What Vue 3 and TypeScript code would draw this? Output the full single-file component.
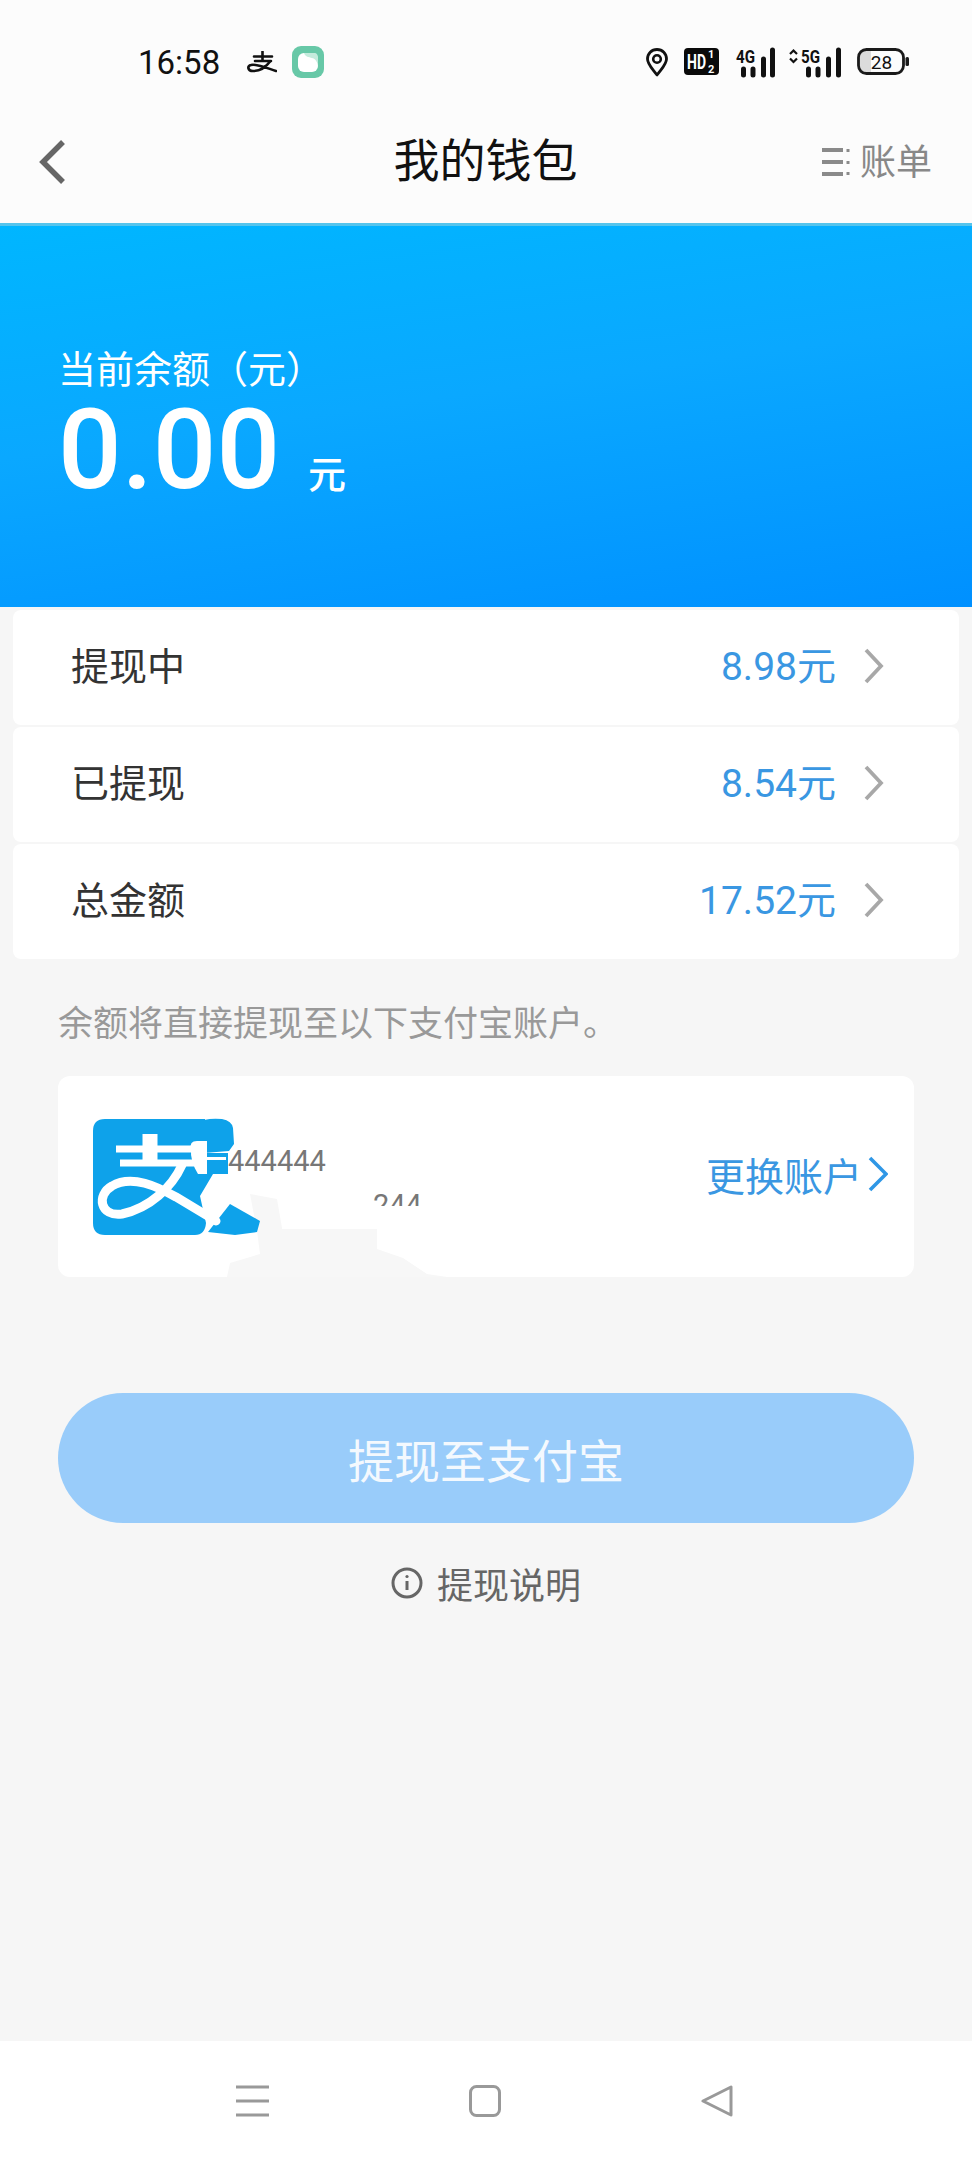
<script setup lang="ts">
interface WalletRow {
  label: string
  amount: string
}

const rows: WalletRow[] = [
  { label: '提现中', amount: '8.98元' },
  { label: '已提现', amount: '8.54元' },
  { label: '总金额', amount: '17.52元' },
]
</script>

<template>
  <div class="page">
    <!-- 状态栏 -->
    <div class="status-bar">
      <span class="time">16:58</span>
      <svg class="notify-pay" width="30" height="22" viewBox="247 52 30 22" fill="none" stroke="#111" stroke-width="2.6" stroke-linecap="round">
        <path d="M254 57.5H272M255 62H271M262.5 52.5V62" />
        <path d="M270 62.5C266 68 260 72 253 72C247.500 72 247 67 251 66C256 64.500 264 68 276 72" />
      </svg>
      <svg class="notify-app" width="32" height="32" viewBox="0 0 32 32">
        <rect width="32" height="32" rx="9" fill="#67c8a7" />
        <rect x="6" y="7" width="20" height="19" rx="6" fill="#fff" />
        <path d="M12 7H22C25 7 26 9 26 12V21C26 19 25 13 20 12C17 11 13 11 12 7Z" fill="#c4ebdc" />
      </svg>
      <svg class="status-icons" width="270" height="36" viewBox="645 44 270 36">
        <path d="M658 75C652 67 648.500 64 648.500 59C648.500 53.500 652.500 49.500 658 49.500C663.500 49.500 667.500 53.500 667.500 59C667.500 64 664 67 658 75Z" fill="none" stroke="#111" stroke-width="2.800" stroke-linejoin="round" />
        <circle cx="658" cy="59" r="3.800" fill="none" stroke="#111" stroke-width="2.600" />
        <rect x="685" y="48" width="35" height="27" rx="4" fill="#0a0a0a" />
        <text x="688" y="69" class="hd" textLength="19" lengthAdjust="spacingAndGlyphs">HD</text>
        <text x="709" y="58" class="hd-sub">1</text>
        <text x="709" y="73" class="hd-sub">2</text>
        <text x="737" y="63" class="net" textLength="19" lengthAdjust="spacingAndGlyphs">4G</text>
        <path d="M744.500 69V75M754 69V75M764.500 59V75M773.500 50V75" stroke="#111" stroke-width="5" stroke-linecap="round" />
        <path d="M791 54L794.500 50.500L798 54M791 58.500L794.500 62L798 58.500" fill="none" stroke="#111" stroke-width="2.200" />
        <text x="802" y="63" class="net" textLength="19" lengthAdjust="spacingAndGlyphs">5G</text>
        <path d="M809.500 69V75M819 69V75M829.500 59V75M839.500 50V75" stroke="#111" stroke-width="5" stroke-linecap="round" />
        <path d="M866 50H872V73H866C861 73 859.500 71 859.500 67V56C859.500 52 861 50 866 50Z" fill="#dcdcdc" />
        <rect x="859.500" y="49.500" width="45" height="24" rx="8" fill="none" stroke="#1a1a1a" stroke-width="2.800" />
        <rect x="906.500" y="57" width="3.500" height="9" rx="1.500" fill="#1a1a1a" />
        <text x="882.500" y="69" text-anchor="middle" class="battery">28</text>
      </svg>
    </div>

    <!-- 标题栏 -->
    <header class="nav-header">
      <svg class="back" width="26" height="46" viewBox="0 0 26 46" fill="none" stroke="#666" stroke-width="5.500">
        <path d="M24 3L4 23L24 43" />
      </svg>
      <h1 class="title">我的钱包</h1>
      <div class="bill">
        <svg width="32" height="30" viewBox="0 0 32 30" fill="none" stroke="#8a8a8a" stroke-width="4">
          <path d="M2 3H23M2 15H23M2 27H23" />
          <path d="M28 2V5M28 14V17M28 25V28" stroke-width="3" />
        </svg>
        <span>账单</span>
      </div>
    </header>

    <!-- 余额 -->
    <section class="hero">
      <div class="hero-label">当前余额（元）</div>
      <div class="hero-amount">
        <span class="hero-num">0.00</span>
        <span class="hero-unit">元</span>
      </div>
    </section>

    <div class="rows">
      <div v-for="row in rows" :key="row.label" class="row">
        <span class="row-label">{{ row.label }}</span>
        <span class="row-amount">{{ row.amount }}</span>
        <svg width="20" height="36" viewBox="0 0 20 36" fill="none" stroke="#a8a8a8" stroke-width="3.800">
          <path d="M2 2L17 18L2 34" />
        </svg>
      </div>
    </div>

    <p class="note">余额将直接提现至以下支付宝账户。</p>

    <!-- 支付宝账户 -->
    <div class="account">
      <div class="account-info">
        <div class="account-line">444444</div>
        <div class="account-line second">244</div>
      </div>
      <div class="account-link">
        <span>更换账户</span>
        <svg width="20" height="36" viewBox="0 0 20 36" fill="none" stroke="#2f97e6" stroke-width="3.600">
          <path d="M2 2L18 18L2 34" />
        </svg>
      </div>
      <!-- 截图上的涂抹痕迹和支付宝图标 -->
      <svg class="account-mask" width="856" height="201" viewBox="58 1075 856 201">
        <path d="M250 1193L277 1198L282 1227L377 1228L377 1248L403 1257L427 1273L447 1276H227L230 1262L260 1253L257 1230Z" fill="#f7f7f7" />
        <path d="M282 1205H440V1228H282Z" fill="#fff" />
        <path d="M105 1118H205V1173H213L200 1195L206 1222Q205 1234 195 1234H105Q93 1234 93 1222V1130Q93 1118 105 1118Z" fill="#0ea2ea" />
        <path d="M204 1119Q212 1117 222 1118Q232 1120 233 1127L234 1143L229 1150L204 1152ZM205 1152H228V1173H205Z" fill="#0ea2ea" />
        <path d="M208 1231L230 1203L260 1220L257 1231L235 1234Z" fill="#0ea2ea" />
        <path d="M191 1148Q189 1140 197 1140H207V1173L198 1173Q190 1160 191 1148Z" fill="#fff" />
        <g fill="none" stroke="#fff">
          <path d="M116 1148H196M120 1162H196" stroke-width="7" />
          <path d="M205 1157.500H226" stroke-width="3" />
          <path d="M150 1133V1163" stroke-width="15" />
          <path d="M182 1164C172 1186 150 1207 122 1213C100 1216 96 1194 112 1185C132 1173 158 1186 176 1196L216 1220" stroke-width="9" stroke-linecap="round" />
        </g>
      </svg>
    </div>

    <button class="withdraw">提现至支付宝</button>

    <div class="explain">
      <svg width="32" height="32" viewBox="0 0 32 32" fill="none" stroke="#666" stroke-width="3">
        <circle cx="16" cy="16" r="14" />
        <path d="M16 14V23" />
        <circle cx="16" cy="9.500" r="1.600" fill="#666" stroke="none" />
      </svg>
      <span>提现说明</span>
    </div>

    <!-- 底部导航 -->
    <footer class="sys-nav">
      <svg width="33" height="32" viewBox="0 0 33 32" fill="none" stroke="#999" stroke-width="3">
        <path d="M0 2H33M0 16H33M0 30H33" />
      </svg>
      <svg width="32" height="32" viewBox="0 0 32 32" fill="none" stroke="#999" stroke-width="3">
        <rect x="1.500" y="1.500" width="29" height="29" rx="6" />
      </svg>
      <svg width="32" height="32" viewBox="0 0 32 32" fill="none" stroke="#999" stroke-width="3" stroke-linejoin="round">
        <path d="M30 2V30L2 16Z" />
      </svg>
    </footer>
  </div>
</template>

<style>
html,
body {
  margin: 0;
  background: #f6f6f6;
}
</style>

<style scoped>
.page {
  width: 972px;
  height: 2160px;
  display: flex;
  flex-direction: column;
  background: #f6f6f6;
  font-family: Roboto, "Noto Sans CJK SC", sans-serif;
  overflow: hidden;
}

.status-bar {
  height: 100px;
  box-sizing: border-box;
  padding: 24px 58px 0 138px;
  display: flex;
  align-items: center;
  background: #fcfcfc;
}
.time {
  font-size: 33px;
  color: #111;
  margin-right: 27px;
}
.notify-pay {
  margin-right: 15px;
}
.status-icons {
  margin-left: auto;
}
.hd {
  font: 700 20px "Roboto", sans-serif;
  fill: #fff;
}
.hd-sub {
  font: 700 11px "Roboto", sans-serif;
  fill: #fff;
}
.net {
  font: 700 18px "Roboto", sans-serif;
  fill: #111;
}
.battery {
  font: 400 19px "Roboto", sans-serif;
  fill: #111;
}

.nav-header {
  height: 123px;
  border-bottom: 3px solid #55c4ec;
  display: grid;
  grid-template-columns: 1fr auto 1fr;
  align-items: center;
  background: #fcfcfc;
  padding-left: 39px;
  padding-right: 40px;
}
.title {
  margin: -1px 0 0;
  font-size: 46px;
  font-weight: 400;
  color: #111;
  line-height: 60px;
}
.bill {
  justify-self: end;
  display: flex;
  align-items: center;
  gap: 8px;
  font-size: 36px;
  color: #888;
}
.bill span {
  margin-bottom: 5px;
}

.hero {
  height: 381px;
  box-sizing: border-box;
  padding: 119px 0 0 58px;
  background: linear-gradient(172deg, #00b6ff 0%, #0aa8ff 45%, #0090ff 100%);
  color: #fff;
}
.hero-label {
  font-size: 38px;
  line-height: 50px;
}
.hero-amount {
  display: flex;
  align-items: baseline;
  gap: 28px;
  line-height: 110px;
}
.hero-num {
  font-size: 112px;
  font-weight: 500;
}
.hero-unit {
  font-size: 38px;
  font-weight: 500;
}

.rows {
  padding: 3px 13px 0;
  display: flex;
  flex-direction: column;
  gap: 2px;
}
.row {
  height: 115px;
  box-sizing: border-box;
  padding: 0 75px 4px 58px;
  display: flex;
  align-items: center;
  background: #fff;
  border-radius: 8px;
}
.row-label {
  font-size: 38px;
  color: #333;
  margin: 0 auto 5px 0;
}
.row-amount {
  font-size: 39px;
  color: #3a97e2;
  margin: 0 28px 5px 0;
}

.note {
  margin: 41px 58px 26px;
  font-size: 35px;
  line-height: 50px;
  color: #999;
}

.account {
  position: relative;
  height: 201px;
  margin: 0 58px;
  box-sizing: border-box;
  padding-right: 26px;
  display: flex;
  align-items: center;
  justify-content: space-between;
  background: #fff;
  border-radius: 12px;
}
.account-info {
  padding-left: 170px;
  align-self: flex-start;
  padding-top: 68px;
}
.account-line {
  font-size: 29px;
  line-height: 34px;
  color: #777;
}
.account-line.second {
  margin: 10px 0 0 145px;
}
.account-link {
  display: flex;
  align-items: center;
  gap: 6px;
  margin-top: -6px;
  font-size: 39px;
  color: #3a97e2;
}
.account-mask {
  position: absolute;
  inset: 0;
  pointer-events: none;
}

.withdraw {
  display: block;
  width: 856px;
  height: 130px;
  margin: 116px 58px 0;
  padding: 0;
  border: none;
  border-radius: 65px;
  background: #99ccfa;
  color: #f4f9fe;
  font-family: inherit;
  font-size: 46px;
}

.explain {
  margin-top: 35px;
  height: 50px;
  display: flex;
  align-items: center;
  justify-content: center;
  gap: 14px;
  font-size: 36px;
  color: #666;
}

.sys-nav {
  margin-top: auto;
  height: 119px;
  box-sizing: border-box;
  padding: 0 3px 0 0;
  display: flex;
  align-items: center;
  justify-content: center;
  gap: 200px;
  background: #fff;
}
</style>
